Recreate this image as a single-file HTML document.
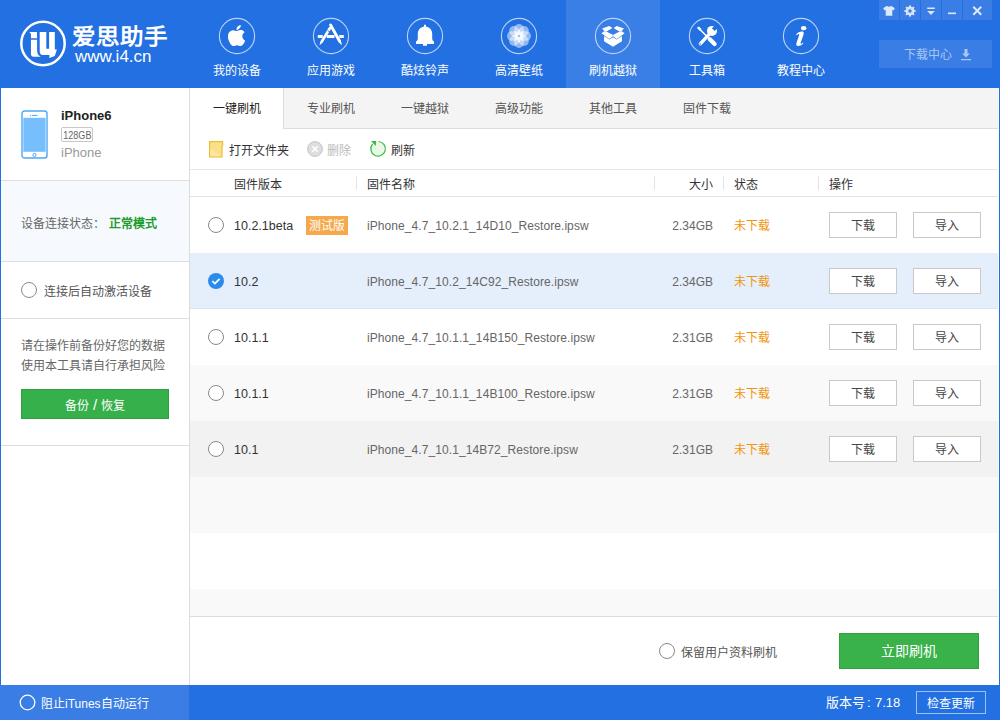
<!DOCTYPE html>
<html lang="zh-CN">
<head>
<meta charset="utf-8">
<style>
*{margin:0;padding:0;box-sizing:border-box}
html,body{width:1000px;height:720px;overflow:hidden;background:#fff;font-family:"Liberation Sans",sans-serif;font-size:12px;color:#333}
.a{position:absolute;white-space:nowrap}
#header{position:absolute;left:0;top:0;width:1000px;height:88px;background:#2270e1}
#brand{position:absolute;left:72px;top:24px;color:#fff;font-size:23.5px;font-weight:bold;letter-spacing:0.9px;line-height:26px;transform:scaleY(0.9);transform-origin:0 50%}
#url{position:absolute;left:75px;top:47px;color:#fff;font-size:17px;line-height:20px}
.nav{position:absolute;top:0;width:94px;height:88px;color:#fff;text-align:center}
.nav.active{background:#3a7fe5}
.nav svg{position:absolute;left:28px;top:17px}
.nav .lb{position:absolute;left:0;top:63px;width:94px;font-size:12px;line-height:16px}
.wc{position:absolute;top:0;height:20px;background:#3a7de4}
.wc svg{position:absolute;left:0;top:0.7px}
#dl{position:absolute;left:879px;top:40px;width:113px;height:28px;background:#3a7de4;color:#a9c8f4;font-size:12px;line-height:31px}
#side{position:absolute;left:0;top:88px;width:190px;height:597px;background:#fff;border-left:1px solid #2270e1;border-right:1px solid #dcdcdc}
#main{position:absolute;left:190px;top:88px;width:808px;height:597px;background:#fff}
#rb{position:absolute;left:998px;top:88px;width:2px;height:597px;background:#2270e1;border-left:1px solid #fff}
#footer{position:absolute;left:0;top:685px;width:1000px;height:35px;background:#2270e1}
.hl{position:absolute;height:1px;background:#dedede}
.vl{position:absolute;width:1px;background:#e3e3e3}
.tab{position:absolute;top:0;width:94px;height:40px;text-align:center;line-height:43px;color:#555;font-size:12px}
.row{position:absolute;left:0;width:808px;height:56px}
.radio{position:absolute;width:16px;height:16px;border:1px solid #8a8a8a;border-radius:50%;background:#fff}
.ver{position:absolute;left:44px;font-size:12.5px;color:#333;line-height:16px}
.fn{position:absolute;left:177px;font-size:12px;color:#666;line-height:16px;letter-spacing:0.08px}
.sz{position:absolute;left:463px;width:60px;text-align:right;font-size:12px;color:#666;line-height:16px}
.st{position:absolute;left:544px;font-size:12px;color:#f0950a;line-height:16px}
.btn{position:absolute;width:68px;height:26px;border:1px solid #c9c9c9;background:#fff;text-align:center;line-height:27px;font-size:12px;color:#444}
</style>
</head>
<body>
<div id="header">
  <svg class="a" style="left:18px;top:18px" width="50" height="50" viewBox="0 0 50 50">
    <circle cx="25" cy="25.5" r="21.7" fill="none" stroke="#fff" stroke-width="2.5"/>
    <path fill="#fff" d="M11.3 14 H18.9 L19.1 20.15 H12.96 V16.1 Z"/>
    <path fill="#fff" d="M12.96 21.8 H19.1 V32.7 C19.1 35.5 20.5 37.8 22.8 38.8 H15.5 C14 38.8 12.96 37.6 12.96 36 Z"/>
    <path fill="#fff" d="M21.7 14 H28.3 V30.8 H31.1 V14 H36.8 V31.5 H38.9 L36.8 37.9 L31.4 40 V36.9 H24.05 C22.6 36.9 21.7 35 21.7 32.7 Z"/>
  </svg>
  <div id="brand">爱思助手</div>
  <div id="url">www.i4.cn</div>

  <div class="nav" style="left:190px">
    <svg width="38" height="38" viewBox="0 0 38 38"><circle cx="19" cy="19" r="17.6" fill="none" stroke="#b8d1f6" stroke-width="1.15"/>
      <g transform="translate(8,8) scale(0.88)"><path fill="#fff" d="M12.152 6.896c-.948 0-2.415-1.078-3.96-1.04-2.040.027-3.910 1.183-4.961 3.014-2.117 3.675-.546 9.103 1.519 12.090 1.013 1.454 2.208 3.090 3.792 3.039 1.520-.065 2.090-.987 3.935-.987 1.831 0 2.350.987 3.960.948 1.637-.026 2.676-1.480 3.676-2.948 1.156-1.688 1.636-3.325 1.662-3.415-.039-.013-3.182-1.221-3.220-4.857-.026-3.040 2.480-4.494 2.597-4.559-1.429-2.090-3.623-2.324-4.390-2.376-2-.156-3.675 1.090-4.610 1.090zM15.530 3.830c.843-1.012 1.400-2.427 1.245-3.830-1.207.052-2.662.805-3.532 1.818-.78.896-1.454 2.338-1.273 3.714 1.338.104 2.715-.688 3.559-1.701"/></g>
    </svg>
    <div class="lb">我的设备</div></div>
  <div class="nav" style="left:284px">
    <svg width="38" height="38" viewBox="0 0 38 38"><circle cx="19" cy="19" r="17.6" fill="none" stroke="#b8d1f6" stroke-width="1.15"/>
      <path d="M5.8 18 h4.9 v3 h-4.9z M14.8 18 h7.7 v3 h-7.7z M27.3 18 h4.5 v3 h-4.5z" fill="#fff"/>
      <path fill="#fff" d="M16.85 10.30 L8.45 24.14 L7.50 28.30 L10.75 25.54 L19.15 11.70 A1.35 1.35 0 0 0 16.85 10.30 Z"/>
      <path d="M15.6 13.6 L17.9 15" stroke="#2270e1" stroke-width="0.9"/>
      <path fill="#fff" d="M17.33 8.71 L26.37 24.95 L29.90 28.30 L28.91 23.53 L19.87 7.29 A1.45 1.45 0 0 0 17.33 8.71 Z"/>
    </svg>
    <div class="lb">应用游戏</div></div>
  <div class="nav" style="left:378px">
    <svg width="38" height="38" viewBox="0 0 38 38"><circle cx="19" cy="19" r="17.6" fill="none" stroke="#b8d1f6" stroke-width="1.15"/>
      <path fill="#fff" d="M18 7.8 h2 v1.6 C24 10.2 26.2 13 26.2 17 V21.5 C26.2 23 27 24 28 24.5 V27 H10 V24.5 C11 24 11.8 23 11.8 21.5 V17 C11.8 13 14 10.2 18 9.4 Z M17 27 h4 v1.8 h-4z"/>
    </svg>
    <div class="lb">酷炫铃声</div></div>
  <div class="nav" style="left:472px">
    <svg width="38" height="38" viewBox="0 0 38 38"><circle cx="19" cy="19" r="17.6" fill="none" stroke="#b8d1f6" stroke-width="1.15"/>
      <g transform="translate(19,19)" fill="#fff" fill-opacity="0.5"><circle cx="7.20" cy="0.00" r="4.8"/><circle cx="5.09" cy="5.09" r="4.8"/><circle cx="0.00" cy="7.20" r="4.8"/><circle cx="-5.09" cy="5.09" r="4.8"/><circle cx="-7.20" cy="0.00" r="4.8"/><circle cx="-5.09" cy="-5.09" r="4.8"/><circle cx="-0.00" cy="-7.20" r="4.8"/><circle cx="5.09" cy="-5.09" r="4.8"/><path fill-opacity="0.8" d="M0 -8 L2.2 -2.2 L8 0 L2.2 2.2 L0 8 L-2.2 2.2 L-8 0 L-2.2 -2.2 Z"/><path fill-opacity="0.8" transform="rotate(45)" d="M0 -8 L2.2 -2.2 L8 0 L2.2 2.2 L0 8 L-2.2 2.2 L-8 0 L-2.2 -2.2 Z"/></g>
      <circle cx="19" cy="19" r="1.2" fill="#9fbff0"/>
    </svg>
    <div class="lb">高清壁纸</div></div>
  <div class="nav active" style="left:566px">
    <svg width="38" height="38" viewBox="0 0 38 38"><circle cx="19" cy="19" r="17.6" fill="none" stroke="#b8d1f6" stroke-width="1.15"/>
      <g transform="translate(4,5) scale(0.041667)">
        <path fill="#fff" d="M145 338 L145 462 L360 592 L575 462 L575 338 L448 418 L360 366 L272 418 Z"/>
        <path fill="#fff" d="M82 268 L150 220 L210 230 L360 305 L352 350 L270 405 Z"/>
        <path fill="#fff" d="M638 268 L570 220 L510 230 L360 305 L368 350 L450 405 Z"/>
        <path fill="#fff" d="M98 158 L270 98 L345 143 L210 230 L150 214 Z"/>
        <path fill="#fff" d="M375 143 L450 98 L622 158 L570 214 L510 230 Z"/>
        <path fill="#3a7fe5" d="M210 230 L360 168 L510 230 L360 305 Z"/>
      </g>
    </svg>
    <div class="lb">刷机越狱</div></div>
  <div class="nav" style="left:660px">
    <svg width="38" height="38" viewBox="0 0 38 38"><circle cx="19" cy="19" r="17.6" fill="none" stroke="#b8d1f6" stroke-width="1.15"/>
      <path d="M11.5 12 L20.5 21" stroke="#fff" stroke-width="1.5"/>
      <rect x="9" y="10.3" width="4.6" height="2.6" rx="1.2" transform="rotate(45 11.3 11.6)" fill="#fff"/>
      <path d="M21.8 22.2 L26.6 27" stroke="#fff" stroke-width="4.2" stroke-linecap="round"/>
      <path d="M21.5 16.8 L12.3 26.8" stroke="#fff" stroke-width="3.3" stroke-linecap="round"/>
      <circle cx="12.2" cy="26.9" r="0.75" fill="#2270e1"/>
      <circle cx="24" cy="13.9" r="5" fill="#fff"/>
      <rect x="-2" y="-6" width="4" height="6.4" transform="translate(25.6 12.3) rotate(45)" fill="#2270e1"/>
    </svg>
    <div class="lb">工具箱</div></div>
  <div class="nav" style="left:754px">
    <svg width="38" height="38" viewBox="0 0 38 38"><circle cx="19" cy="19" r="17.6" fill="none" stroke="#b8d1f6" stroke-width="1.15"/>
      <ellipse cx="21.7" cy="11.2" rx="2.7" ry="2.1" fill="#fff"/>
      <path transform="translate(18 22) scale(1.1) translate(-18 -22)" fill="#fff" d="M14.5 17.8 C15.8 16 18 15 20.3 15.2 C21.8 15.4 21.5 17 21 18.5 L18.6 25.5 C18.3 26.5 19 26.8 19.6 26.2 L20.5 25.2 L21.1 25.6 C19.8 27.6 17.8 28.5 15.8 28.3 C14.2 28.1 14.5 26.5 15 25 L17.2 18.7 C17.5 17.8 17.2 17.3 16.4 17.6 C15.8 17.9 15.4 18.3 15 18.5 Z"/>
    </svg>
    <div class="lb">教程中心</div></div>

  <div class="wc" style="left:879px;width:20px"><svg width="20" height="20"><path fill="#dce8fb" d="M6.5 5.5 L8.5 5 C9 6 11 6 11.5 5 L13.5 5.5 L15.8 7.5 L14.3 9.5 L13.3 9 V14.8 H6.7 V9 L5.7 9.5 L4.2 7.5 Z"/></svg></div>
  <div class="wc" style="left:900px;width:20px"><svg width="20" height="20"><g transform="translate(10,10)" fill="#dce8fb"><circle r="3.6" fill="none" stroke="#dce8fb" stroke-width="1.6"/><rect x="-0.9" y="-5.6" width="1.8" height="11.2"/><rect x="-0.9" y="-5.6" width="1.8" height="11.2" transform="rotate(45)"/><rect x="-0.9" y="-5.6" width="1.8" height="11.2" transform="rotate(90)"/><rect x="-0.9" y="-5.6" width="1.8" height="11.2" transform="rotate(135)"/><circle r="1.7" fill="#3a7de4"/></g></svg></div>
  <div class="wc" style="left:921px;width:20px"><svg width="20" height="20"><path fill="#dce8fb" d="M6.2 6.5 h7.6 v1.6 h-7.6z M6.2 10 h7.6 L10 14 Z"/></svg></div>
  <div class="wc" style="left:942px;width:20px"><svg width="20" height="20"><rect x="6" y="11.5" width="8" height="1.6" fill="#dce8fb"/></svg></div>
  <div class="wc" style="left:963px;width:29px"><svg width="29" height="20"><path d="M10.3 5.8 L18.2 13.7 M18.2 5.8 L10.3 13.7" stroke="#dce8fb" stroke-width="2"/></svg></div>
  <div id="dl"><span class="a" style="left:25px;top:0">下载中心</span>
    <svg class="a" style="left:80px;top:7px" width="14" height="16"><path fill="#a9c8f4" d="M5.5 2 h3 v4.5 h2.5 L7 10.5 L3 6.5 h2.5z M2 12 h10 v1.2 H2z"/></svg>
  </div>
</div>

<div id="side">
  <svg class="a" style="left:20px;top:22px" width="28" height="50" viewBox="0 0 28 50">
    <rect x="1" y="1" width="25" height="47" rx="2.5" fill="#fff" stroke="#4fa7f6" stroke-width="1.4"/>
    <rect x="2.3" y="7.8" width="22.3" height="34" fill="#76bffc"/>
    <circle cx="9.5" cy="5.4" r="0.6" fill="#4fa7f6"/>
    <rect x="11" y="4.9" width="5.5" height="1" fill="#4fa7f6"/>
    <circle cx="13.5" cy="45" r="1.6" fill="none" stroke="#4fa7f6" stroke-width="1"/>
  </svg>
  <div class="a" style="left:60px;top:20px;font-size:13px;font-weight:bold;color:#222;line-height:16px">iPhone6</div>
  <div class="a" style="left:60px;top:39px;width:32px;height:15px;border:1px solid #c8c8c8;border-radius:2px;font-size:10.5px;line-height:14px;color:#666;text-align:center;letter-spacing:0px"><span style="display:inline-block;transform:scaleX(0.86);transform-origin:50% 50%;margin-left:-2px;margin-right:-2px">128GB</span></div>
  <div class="a" style="left:60px;top:57px;font-size:13px;color:#999;line-height:16px">iPhone</div>
  <div class="hl" style="left:0;top:92px;width:188px"></div>
  <div class="a" style="left:0;top:93px;width:188px;height:80px;background:#f6fafe"></div>
  <div class="a" style="left:20px;top:127.5px;font-size:12px;color:#666;line-height:16px">设备连接状态：</div>
  <div class="a" style="left:108px;top:127.5px;font-size:12px;color:#1f9a2d;font-weight:bold;line-height:16px">正常模式</div>
  <div class="hl" style="left:0;top:173px;width:188px"></div>
  <div class="radio" style="left:20px;top:194px"></div>
  <div class="a" style="left:43px;top:195.5px;font-size:12px;color:#555;line-height:16px">连接后自动激活设备</div>
  <div class="hl" style="left:0;top:230px;width:188px"></div>
  <div class="a" style="left:20px;top:248px;font-size:12px;color:#666;line-height:20px">请在操作前备份好您的数据<br>使用本工具请自行承担风险</div>
  <div class="a" style="left:20px;top:301px;width:148px;height:30px;background:#36b04a;border:1px solid #2da040;color:#fff;text-align:center;line-height:33px;word-spacing:1px;font-size:12px">备份 <span style="font-size:15px;line-height:10px;font-weight:300">/</span> 恢复</div>
  <div class="hl" style="left:0;top:357px;width:188px"></div>
</div>

<div id="main">
  <!-- tabs -->
  <div class="a" style="left:0;top:0;width:808px;height:40px;background:#f4f4f4"></div>
  <div class="hl" style="left:0;top:40px;width:808px;background:#dcdcdc"></div>
  <div class="tab" style="left:0;background:#fff;color:#222;height:41px;border-right:1px solid #dcdcdc">一键刷机</div>
  <div class="tab" style="left:94px">专业刷机</div>
  <div class="tab" style="left:188px">一键越狱</div>
  <div class="tab" style="left:282px">高级功能</div>
  <div class="tab" style="left:376px">其他工具</div>
  <div class="tab" style="left:470px">固件下载</div>

  <!-- toolbar -->
  <svg class="a" style="left:19px;top:53px" width="15" height="17" viewBox="0 0 15 17">
    <path d="M0.6 0.6 H13.6 V4.2 L13 4.8 V15.8 H0.6 Z" fill="#fbe08a" stroke="#f0be2c" stroke-width="1.2"/>
    <path d="M1.2 8 L12.4 15.2 H1.2 Z" fill="#fde7a3"/>
  </svg>
  <div class="a" style="left:39px;top:54.5px;font-size:12px;color:#333;line-height:16px">打开文件夹</div>
  <svg class="a" style="left:117px;top:53px" width="16" height="16" viewBox="0 0 16 16">
    <circle cx="8" cy="8" r="7.4" fill="#dedede" stroke="#c4c4c4" stroke-width="1"/>
    <path d="M5.3 5.3 L10.7 10.7 M10.7 5.3 L5.3 10.7" stroke="#fff" stroke-width="1.6"/>
  </svg>
  <div class="a" style="left:137px;top:54.5px;font-size:12px;color:#bbb;line-height:16px">删除</div>
  <svg class="a" style="left:179px;top:52px" width="18" height="18" viewBox="0 0 18 18">
    <circle cx="9" cy="8.8" r="7.2" fill="#e6fae6"/>
    <path d="M9.6 1.5 A7.3 7.3 0 1 1 3.6 4" fill="none" stroke="#3cb84a" stroke-width="1.25"/>
    <path d="M2 1 L7.2 1 L6.8 6 Z" fill="#3cb84a"/>
  </svg>
  <div class="a" style="left:201px;top:54.5px;font-size:12px;color:#333;line-height:16px">刷新</div>

  <!-- table header -->
  <div class="hl" style="left:0;top:81px;width:808px;background:#e8e8e8"></div>
  <div class="a" style="left:44px;top:88.5px;font-size:12px;color:#333;line-height:16px">固件版本</div>
  <div class="vl" style="left:166px;top:88px;height:14px"></div>
  <div class="a" style="left:177px;top:88.5px;font-size:12px;color:#333;line-height:16px">固件名称</div>
  <div class="vl" style="left:464px;top:88px;height:14px"></div>
  <div class="a" style="left:499px;top:88.5px;font-size:12px;color:#333;line-height:16px">大小</div>
  <div class="vl" style="left:533px;top:88px;height:14px"></div>
  <div class="a" style="left:544px;top:88.5px;font-size:12px;color:#333;line-height:16px">状态</div>
  <div class="vl" style="left:628px;top:88px;height:14px"></div>
  <div class="a" style="left:639px;top:88.5px;font-size:12px;color:#333;line-height:16px">操作</div>
  <div class="hl" style="left:0;top:108px;width:808px;background:#e3e3e3"></div>

  <!-- rows -->
  <div class="row" style="top:109px;background:#fff">
    <div class="radio" style="left:18px;top:20px"></div>
    <div class="ver" style="top:20.5px">10.2.1beta</div>
    <div class="a" style="left:116px;top:19px;width:42px;height:19px;background:#f5a94a;color:#fff;font-size:12px;line-height:20px;text-align:center">测试版</div>
    <div class="fn" style="top:20.5px">iPhone_4.7_10.2.1_14D10_Restore.ipsw</div>
    <div class="sz" style="top:20.5px">2.34GB</div>
    <div class="st" style="top:20.5px">未下载</div>
    <div class="btn" style="left:639px;top:15px">下载</div>
    <div class="btn" style="left:723px;top:15px">导入</div>
  </div>
  <div class="row" style="top:165px;background:#e5effb;border-bottom:1px solid #d8e4f4">
    <svg class="a" style="left:18px;top:20px" width="16" height="16" viewBox="0 0 16 16"><circle cx="8" cy="8" r="8" fill="#2a8bef"/><path d="M4.3 8.2 L6.9 10.6 L11.6 5.8" fill="none" stroke="#fff" stroke-width="1.8"/></svg>
    <div class="ver" style="top:20.5px">10.2</div>
    <div class="fn" style="top:20.5px">iPhone_4.7_10.2_14C92_Restore.ipsw</div>
    <div class="sz" style="top:20.5px">2.34GB</div>
    <div class="st" style="top:20.5px">未下载</div>
    <div class="btn" style="left:639px;top:15px">下载</div>
    <div class="btn" style="left:723px;top:15px">导入</div>
  </div>
  <div class="row" style="top:221px;background:#fff">
    <div class="radio" style="left:18px;top:20px"></div>
    <div class="ver" style="top:20.5px">10.1.1</div>
    <div class="fn" style="top:20.5px">iPhone_4.7_10.1.1_14B150_Restore.ipsw</div>
    <div class="sz" style="top:20.5px">2.31GB</div>
    <div class="st" style="top:20.5px">未下载</div>
    <div class="btn" style="left:639px;top:15px">下载</div>
    <div class="btn" style="left:723px;top:15px">导入</div>
  </div>
  <div class="row" style="top:277px;background:#f9f9f9">
    <div class="radio" style="left:18px;top:20px"></div>
    <div class="ver" style="top:20.5px">10.1.1</div>
    <div class="fn" style="top:20.5px">iPhone_4.7_10.1.1_14B100_Restore.ipsw</div>
    <div class="sz" style="top:20.5px">2.31GB</div>
    <div class="st" style="top:20.5px">未下载</div>
    <div class="btn" style="left:639px;top:15px">下载</div>
    <div class="btn" style="left:723px;top:15px">导入</div>
  </div>
  <div class="row" style="top:333px;background:#f2f2f2">
    <div class="radio" style="left:18px;top:20px"></div>
    <div class="ver" style="top:20.5px">10.1</div>
    <div class="fn" style="top:20.5px">iPhone_4.7_10.1_14B72_Restore.ipsw</div>
    <div class="sz" style="top:20.5px">2.31GB</div>
    <div class="st" style="top:20.5px">未下载</div>
    <div class="btn" style="left:639px;top:15px">下载</div>
    <div class="btn" style="left:723px;top:15px">导入</div>
  </div>
  <div class="row" style="top:389px;background:#f9f9f9"></div>
  <div class="row" style="top:445px;background:#fff"></div>
  <div class="row" style="top:501px;height:27px;background:#f9f9f9"></div>
  <div class="hl" style="left:0;top:528px;width:808px;background:#dcdcdc"></div>

  <!-- bottom -->
  <div class="radio" style="left:469px;top:555px"></div>
  <div class="a" style="left:491px;top:556.5px;font-size:12px;color:#555;line-height:16px">保留用户资料刷机</div>
  <div class="a" style="left:649px;top:545px;width:140px;height:36px;background:#39b24a;border:1px solid #2fa240;color:#fff;text-align:center;line-height:34px;font-size:14px">立即刷机</div>
</div>
<div id="rb"></div>

<div id="footer">
  <div class="a" style="left:0;top:0;width:189px;height:35px;background:#3a7de4"></div>
  <svg class="a" style="left:19px;top:9px" width="17" height="17"><circle cx="8.5" cy="8.5" r="7.3" fill="none" stroke="#fff" stroke-width="1.3"/></svg>
  <div class="a" style="left:41px;top:10.5px;font-size:12px;color:#fff;line-height:16px">阻止iTunes自动运行</div>
  <div class="a" style="left:826px;top:10px;font-size:13px;color:#fff;line-height:16px">版本号</div><div class="a" style="left:867px;top:10px;font-size:13px;color:#fff;line-height:16px">:</div><div class="a" style="left:875px;top:10px;font-size:13px;color:#fff;line-height:16px">7.18</div>
  <div class="a" style="left:916px;top:6px;width:70px;height:23px;border:1px solid #9fc0f0;color:#fff;text-align:center;line-height:24px;font-size:12px">检查更新</div>
</div>
</body>
</html>
